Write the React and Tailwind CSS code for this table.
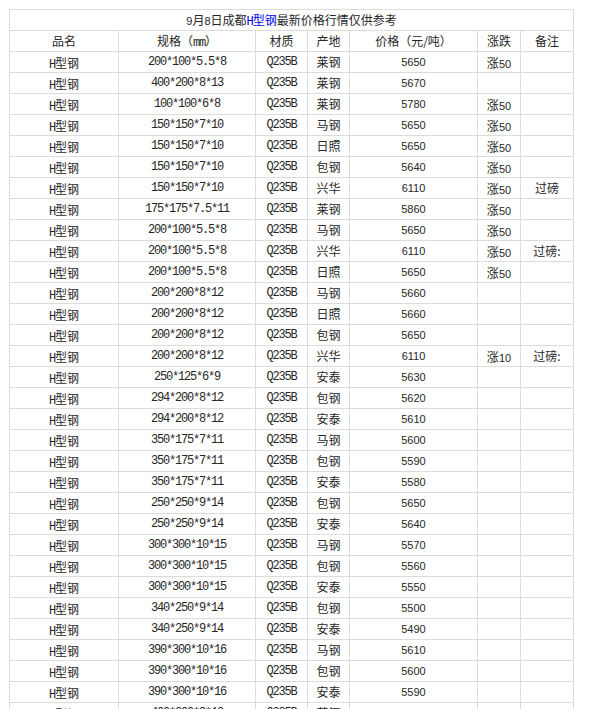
import React from "react";

const rows = [
  ["200*100*5.5*8", "莱钢", "5650", "涨50", ""],
  ["400*200*8*13", "莱钢", "5670", "", ""],
  ["100*100*6*8", "莱钢", "5780", "涨50", ""],
  ["150*150*7*10", "马钢", "5650", "涨50", ""],
  ["150*150*7*10", "日照", "5650", "涨50", ""],
  ["150*150*7*10", "包钢", "5640", "涨50", ""],
  ["150*150*7*10", "兴华", "6110", "涨50", "过磅"],
  ["175*175*7.5*11", "莱钢", "5860", "涨50", ""],
  ["200*100*5.5*8", "马钢", "5650", "涨50", ""],
  ["200*100*5.5*8", "兴华", "6110", "涨50", "过磅:"],
  ["200*100*5.5*8", "日照", "5650", "涨50", ""],
  ["200*200*8*12", "马钢", "5660", "", ""],
  ["200*200*8*12", "日照", "5660", "", ""],
  ["200*200*8*12", "包钢", "5650", "", ""],
  ["200*200*8*12", "兴华", "6110", "涨10", "过磅:"],
  ["250*125*6*9", "安泰", "5630", "", ""],
  ["294*200*8*12", "包钢", "5620", "", ""],
  ["294*200*8*12", "安泰", "5610", "", ""],
  ["350*175*7*11", "马钢", "5600", "", ""],
  ["350*175*7*11", "包钢", "5590", "", ""],
  ["350*175*7*11", "安泰", "5580", "", ""],
  ["250*250*9*14", "包钢", "5650", "", ""],
  ["250*250*9*14", "安泰", "5640", "", ""],
  ["300*300*10*15", "马钢", "5570", "", ""],
  ["300*300*10*15", "包钢", "5560", "", ""],
  ["300*300*10*15", "安泰", "5550", "", ""],
  ["340*250*9*14", "包钢", "5500", "", ""],
  ["340*250*9*14", "安泰", "5490", "", ""],
  ["390*300*10*16", "马钢", "5610", "", ""],
  ["390*300*10*16", "包钢", "5600", "", ""],
  ["390*300*10*16", "安泰", "5590", "", ""],
  ["400*200*8*13", "莱钢", "5650", "", ""],
];

const cell =
  "h-[21px] border-r border-b border-[#dcdcdc] text-center leading-[20px] whitespace-nowrap overflow-hidden";
const cjk = "font-['Noto_Sans_CJK_SC',sans-serif] text-[12px]";
const mono =
  "font-['Liberation_Mono','Noto_Sans_CJK_SC',monospace] text-[12px] tracking-[-1.2px]";
const sans = "font-['Liberation_Sans','Noto_Sans_CJK_SC',sans-serif] text-[11px]";
const grid = "grid grid-cols-[109px_137px_52px_42px_128px_43px_53px]";

function HName() {
  return (
    <>
      <span className="font-['Liberation_Mono',monospace] text-[12px] tracking-[-1.2px]">H</span>
      <span className="font-['Noto_Sans_CJK_SC',sans-serif] text-[12px]">型钢</span>
    </>
  );
}

function Change({ v }) {
  if (!v) return null;
  return (
    <>
      <span className="font-['Noto_Sans_CJK_SC',sans-serif] text-[12px]">{v[0]}</span>
      <span className="font-['Liberation_Sans',sans-serif] text-[11px]">{v.slice(1)}</span>
    </>
  );
}

export default function App() {
  return (
    <div className="w-[591px] h-[709px] overflow-hidden bg-white text-[#262626]">
      <div className="ml-[9px] mt-[9px] w-[565px] border-l border-t border-[#dcdcdc]">
        <div className={cell + " " + cjk}>
          <span className="font-['Liberation_Sans',sans-serif] text-[11px]">9</span>
          <span>月</span>
          <span className="font-['Liberation_Sans',sans-serif] text-[11px]">8</span>
          <span>日成都</span>
          <span className="text-[#0000ee]">
            <span className="font-['Liberation_Mono',monospace] tracking-[-1.2px]">H</span>型钢
          </span>
          <span>最新价格行情仅供参考</span>
        </div>
        <div className={grid}>
          <div className={cell + " " + cjk}>品名</div>
          <div className={cell + " " + cjk}>
            规格（<span className="font-['Liberation_Mono',monospace] tracking-[-1.2px]">mm</span>）
          </div>
          <div className={cell + " " + cjk}>材质</div>
          <div className={cell + " " + cjk}>产地</div>
          <div className={cell + " " + cjk}>价格（元/吨）</div>
          <div className={cell + " " + cjk}>涨跌</div>
          <div className={cell + " " + cjk}>备注</div>
        </div>
        {rows.map((r, i) => (
          <div key={i} className={grid}>
            <div className={cell}>
              <HName />
            </div>
            <div className={cell + " " + mono}>{r[0]}</div>
            <div className={cell + " " + mono}>Q235B</div>
            <div className={cell + " " + cjk}>{r[1]}</div>
            <div className={cell + " " + sans}>{r[2]}</div>
            <div className={cell}>
              <Change v={r[3]} />
            </div>
            <div className={cell + " " + cjk}>{r[4]}</div>
          </div>
        ))}
      </div>
    </div>
  );
}
